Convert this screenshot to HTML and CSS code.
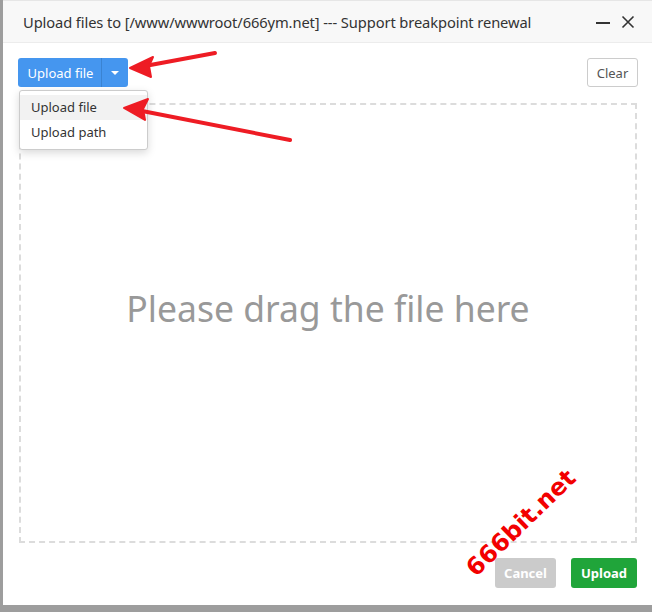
FILE: index.html
```html
<!DOCTYPE html>
<html>
<head>
<meta charset="utf-8">
<link rel="stylesheet" href="styles.css">
</head>
<body>
<div class="modal">
  <div class="modal-header">
    <span class="title">Upload files to [/www/wwwroot/666ym.net] --- Support breakpoint renewal</span>
    <div class="header-tools">
      <span class="minimize"></span>
      <svg class="close" width="14" height="14" viewBox="0 0 14 14"><path d="M1.5 1.5 L12.5 12.5 M12.5 1.5 L1.5 12.5" stroke="#333" stroke-width="1.6" fill="none"/></svg>
    </div>
  </div>
  <div class="modal-body">
    <div class="toolbar">
      <div class="btn-group">
        <button class="btn-main">Upload file</button>
        <button class="btn-caret"><span class="caret"></span></button>
        <ul class="dropdown">
          <li class="active">Upload file</li>
          <li>Upload path</li>
        </ul>
      </div>
      <button class="btn-clear">Clear</button>
    </div>
    <div class="dropzone">
      <span class="drop-text">Please drag the file here</span>
    </div>
    <div class="footer">
      <button class="btn-cancel">Cancel</button>
      <button class="btn-upload">Upload</button>
    </div>
  </div>
  <div class="watermark">666bit.net</div>
  <svg class="arrows" width="649" height="200" viewBox="0 0 649 200">
    <g fill="#ee1c24" stroke="#ee1c24" stroke-linecap="round" stroke-linejoin="round">
      <path d="M215 53 L145 66" stroke-width="4" fill="none"/>
      <path d="M130 68 L153 57 L149 66 L151 77 Z" stroke-width="2"/>
      <path d="M290 140 L137 110" stroke-width="4" fill="none"/>
      <path d="M124 108 L148 99 L143 109 L145 120 Z" stroke-width="2"/>
    </g>
  </svg>
</div>
</body>
</html>
```

FILE: styles.css
```css
* { box-sizing: border-box; }
html, body {
  margin: 0;
  padding: 0;
  width: 652px;
  height: 612px;
  overflow: hidden;
  background: #9d9d9d;
  font-family: "Noto Sans", "Open Sans", sans-serif;
}
.modal {
  position: relative;
  margin-left: 3px;
  width: 649px;
  height: 605px;
  background: #fff;
  display: flex;
  flex-direction: column;
}
.modal-header {
  height: 43px;
  background: #f8f8f8;
  border-bottom: 1px solid #ececec;
  border-top: 1px solid #e6e6e6;
  display: flex;
  align-items: center;
  padding: 0 17px 0 20px;
}
.title {
  flex: 1;
  font-size: 14.7px;
  color: #333;
  white-space: nowrap;
  letter-spacing: -0.1px;
}
.header-tools {
  display: flex;
  align-items: center;
  gap: 11px;
}
.minimize {
  display: block;
  width: 14px;
  height: 2px;
  background: #333;
  margin-top: 3px;
}
.close { display: block; }
.modal-body {
  flex: 1;
  display: flex;
  flex-direction: column;
  padding: 15px 15px 17px 15px;
}
.toolbar {
  display: flex;
  justify-content: space-between;
  align-items: flex-start;
  height: 29px;
}
.btn-group {
  position: relative;
  display: flex;
  margin-left: 0;
}
button {
  font-family: inherit;
  border: none;
  margin: 0;
  cursor: pointer;
}
.btn-main {
  height: 29px;
  width: 84px;
  padding: 0 0 0 2px;
  background: #4596ef;
  color: #fff;
  font-size: 13px;
  border-radius: 3px 0 0 3px;
  border-right: 1px solid #3a83d2;
}
.btn-caret {
  height: 29px;
  width: 26px;
  padding: 0;
  background: #4596ef;
  border-radius: 0 3px 3px 0;
  display: flex;
  align-items: center;
  justify-content: center;
}
.caret {
  display: block;
  width: 0;
  height: 0;
  border-left: 4px solid transparent;
  border-right: 4px solid transparent;
  border-top: 4px solid #fff;
  margin-top: 1px;
}
.dropdown {
  position: absolute;
  top: 32px;
  left: 1px;
  width: 129px;
  margin: 0;
  padding: 4px 0;
  list-style: none;
  background: #fff;
  border: 1px solid #ccc;
  border-radius: 3px;
  box-shadow: 0 3px 8px rgba(0,0,0,0.15);
  z-index: 5;
}
.dropdown li {
  height: 25px;
  line-height: 25px;
  padding-left: 11px;
  font-size: 13px;
  color: #333;
}
.dropdown li.active { background: #f2f2f2; }
.btn-clear {
  height: 29px;
  width: 51px;
  padding: 0;
  background: #fff;
  border: 1px solid #ccc;
  border-radius: 3px;
  color: #555;
  font-size: 13px;
  margin-right: -1px;
}
.dropzone {
  flex: 1;
  margin-top: 16px;
  margin-left: 1px;
  border: 2px dashed #dcdcdc;
  display: flex;
  align-items: center;
  justify-content: center;
}
.drop-text {
  font-size: 35.5px;
  color: #999;
  margin-bottom: 30px;
}
.footer {
  display: flex;
  justify-content: flex-end;
  gap: 15px;
  margin-top: 15px;
  height: 30px;
}
.btn-cancel, .btn-upload {
  height: 30px;
  border-radius: 3px;
  color: #fff;
  font-size: 13px;
  font-weight: bold;
  padding: 0;
}
.btn-cancel { width: 61px; background: #cbcbcb; }
.btn-upload { width: 66px; background: #20a53a; }
.watermark {
  position: absolute;
  left: 443px;
  top: 508px;
  width: 150px;
  text-align: center;
  font-family: "DejaVu Sans", sans-serif;
  font-weight: bold;
  font-size: 24px;
  color: #f20000;
  transform: rotate(-44deg);
  white-space: nowrap;
  line-height: 30px;
}
.arrows {
  position: absolute;
  left: -3px;
  top: 0;
  pointer-events: none;
  z-index: 10;
}
```
